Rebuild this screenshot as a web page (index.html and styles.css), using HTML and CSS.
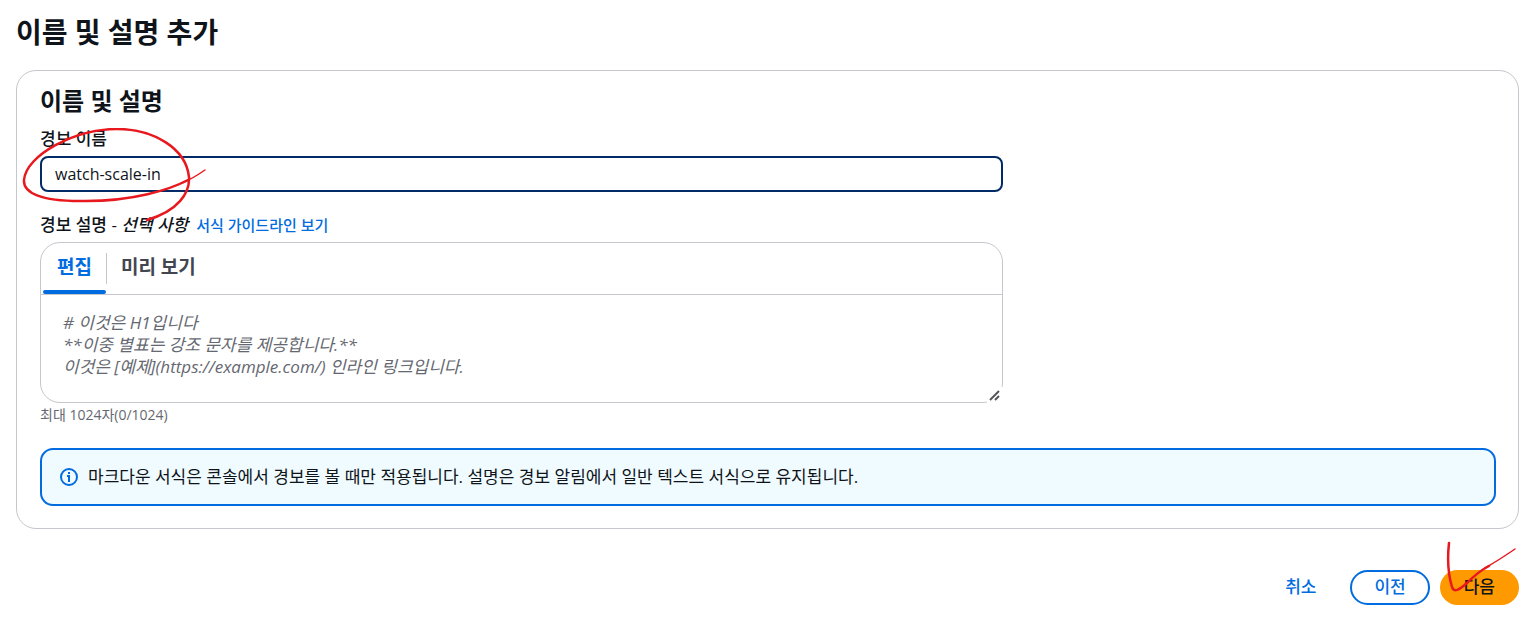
FILE: index.html
```html
<!DOCTYPE html>
<html lang="ko">
<head>
<meta charset="utf-8">
<meta name="viewport" content="width=device-width, initial-scale=1">
<title>이름 및 설명 추가</title>
<link rel="stylesheet" href="styles.css">
</head>
<body>
<main class="page">
  <h1 class="page-title">이름 및 설명 추가</h1>

  <form class="form">
    <section class="card">
      <h2 class="card-title">이름 및 설명</h2>

      <div class="field name-field">
        <label class="label" for="alarm-name">경보 이름</label>
        <input class="text-input" id="alarm-name" type="text" value="watch-scale-in">
        <svg class="mark mark-circle" viewBox="0 0 190 96" aria-hidden="true">
          <path class="stroke-main" d="M129 92C160 83 172 65 171 49C168 20 135 1 99 1C57 1 8 27 6 52C5 65 23 73 62 73C115 74 153 61 170 52"/>
          <path class="stroke-thin" d="M164 55Q174 51 187 42"/>
        </svg>
      </div>

      <div class="field">
        <div class="label-row">
          <label class="label" for="alarm-description">경보 설명 - <i>선택 사항</i></label>
          <a class="guide-link" href="#guide">서식 가이드라인 보기</a>
        </div>
        <div class="editor">
          <div class="tabs" role="tablist">
            <button class="tab tab-active" type="button" role="tab" aria-selected="true">편집</button>
            <button class="tab" type="button" role="tab" aria-selected="false">미리 보기</button>
          </div>
          <textarea class="editor-text" id="alarm-description" placeholder="# 이것은 H1입니다&#10;**이중 별표는 강조 문자를 제공합니다.**&#10;이것은 [예제](https://example.com/) 인라인 링크입니다."></textarea>
          <svg class="grip" viewBox="0 0 12 12" aria-hidden="true"><path d="M1 11L10 2M6 11L10 7"/></svg>
        </div>
        <p class="hint">최대 1024자(0/1024)</p>
      </div>

      <div class="notice">
        <svg class="notice-icon" viewBox="0 0 18 18" aria-hidden="true">
          <circle cx="9" cy="9" r="8"/><path d="M9 4v2M7 8h2v6"/>
        </svg>
        <p class="notice-text">마크다운 서식은 콘솔에서 경보를 볼 때만 적용됩니다. 설명은 경보 알림에서 일반 텍스트 서식으로 유지됩니다.</p>
      </div>
    </section>

    <div class="actions">
      <button class="button button-link" type="button">취소</button>
      <button class="button button-outline" type="button">이전</button>
      <button class="button button-primary" type="submit">다음</button>
      <svg class="mark mark-check" viewBox="0 0 74 54" aria-hidden="true">
        <path class="stroke-main" d="M4 2C2 20 4 36 7 46C9 52 14 49 22 42Q34 30 44 25"/>
        <path class="stroke-thin" d="M40 27Q54 19 70 8"/>
      </svg>
    </div>
  </form>
</main>
</body>
</html>
```

FILE: styles.css
```css
* {
  box-sizing: border-box;
}

body {
  margin: 0;
  background: #fff;
  color: #0f141a;
  font-family: "Open Sans", "Noto Sans CJK KR", sans-serif;
  font-size: 17px;
  line-height: 24px;
}

h1, h2, p {
  margin: 0;
}

button, input, textarea {
  font: inherit;
  color: inherit;
}

.page {
  padding: 12px 8px 32px 16px;
}

.page-title {
  font-size: 28px;
  line-height: 40px;
  font-weight: 700;
}

.card {
  margin-top: 18px;
  padding: 12px 22px 22px 23px;
  border: 1px solid #c6c6cd;
  border-radius: 20px;
}

.card-title {
  font-size: 24px;
  line-height: 36px;
  font-weight: 700;
}

.field {
  width: calc(66% + 2px);
  margin-top: 21px;
}

.name-field {
  position: relative;
  margin-top: 8px;
}

.label {
  display: block;
  font-weight: 500;
}

.text-input {
  display: block;
  width: 100%;
  height: 36px;
  margin-top: 5px;
  padding: 0 13px;
  border: 2px solid #002b66;
  border-radius: 8px;
  background: #fff;
  font-size: 16px;
  outline: none;
}

.label-row {
  display: flex;
  align-items: center;
  gap: 8px;
}

.guide-link {
  color: #006ce0;
  font-size: 15px;
  font-weight: 500;
  text-decoration: none;
}

.editor {
  position: relative;
  margin-top: 5px;
  border: 1px solid #c6c6cd;
  border-radius: 20px;
}

.tabs {
  display: flex;
  height: 52px;
  padding-left: 2px;
  gap: 1px;
  border-bottom: 1px solid #c6c6cd;
}

.tab {
  position: relative;
  padding: 0 14px 4px;
  border: 0;
  background: none;
  color: #424650;
  font-size: 19px;
  font-weight: 700;
}

.tab-active {
  color: #006ce0;
}

.tab-active::before {
  content: "";
  position: absolute;
  right: -1px;
  top: 10px;
  height: 31px;
  border-right: 1px solid #c6c6cd;
}

.tab-active::after {
  content: "";
  position: absolute;
  inset: auto 0 0 0;
  height: 4px;
  border-radius: 2px;
  background: #006ce0;
}

.editor-text {
  display: block;
  width: 100%;
  height: 107px;
  padding: 17px 22px;
  border: 0;
  background: none;
  line-height: 22px;
  outline: none;
  resize: none;
}

.editor-text::placeholder {
  color: #656871;
  font-style: italic;
  opacity: 1;
}

.grip {
  position: absolute;
  right: -1px;
  bottom: -1px;
  width: 16px;
  height: 16px;
  padding: 2px;
  background: #fff;
  fill: none;
  stroke: #55575c;
  stroke-width: 2;
}

.hint {
  color: #656871;
  font-size: 14px;
}

.notice {
  display: flex;
  align-items: center;
  gap: 10px;
  margin-top: 21px;
  padding: 15px 18px;
  border: 2px solid #006ce0;
  border-radius: 13px;
  background: #f0fbff;
}

.notice-icon {
  flex: none;
  width: 18px;
  height: 18px;
  fill: none;
  stroke: #006ce0;
  stroke-width: 2;
}

.actions {
  position: relative;
  display: flex;
  justify-content: flex-end;
  gap: 10px;
  margin-top: 41px;
}

.button {
  height: 35px;
  padding: 0 22px 2px;
  border: 2px solid transparent;
  border-radius: 18px;
  background: none;
  color: #006ce0;
  font-weight: 500;
  line-height: 24px;
}

.button-outline {
  border-color: #006ce0;
}

.button-primary {
  background: #ff9900;
  color: #0f141a;
}

.mark {
  position: absolute;
  fill: none;
  stroke: #e7191f;
  stroke-linecap: round;
  pointer-events: none;
}

.mark-circle {
  left: -22px;
  top: 1px;
  width: 190px;
  height: 96px;
}

.mark-check {
  right: 0;
  top: -29px;
  width: 74px;
  height: 54px;
}

.stroke-main {
  stroke-width: 2.5;
}

.stroke-thin {
  stroke-width: 1.5;
}
```
